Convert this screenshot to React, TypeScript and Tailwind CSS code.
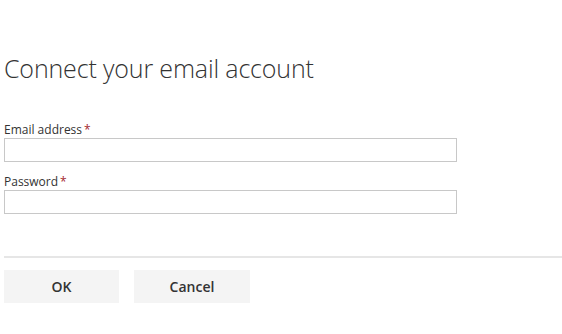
export default function App() {
  return (
    <div
      className="w-[562px] h-[334px] bg-white text-[#333] pl-[4px]"
      style={{ fontFamily: '"Open Sans", "Noto Sans", sans-serif' }}
    >
      <h1 className="pt-[51px] text-[25px] font-light leading-[34px] text-[#333] tracking-[-0.15px]">
        Connect your email account
      </h1>
      <form className="mt-[37px] w-[453px] flex flex-col">
        <label className="text-[12px] leading-[16px] text-[#333]">
          Email address<span className="text-[#a4262c] ml-[2px]">*</span>
        </label>
        <input className="h-[24px] border border-[#c8c8c8] outline-none" />
        <label className="mt-[12px] text-[12px] leading-[16px] text-[#333]">
          Password<span className="text-[#a4262c] ml-[2px]">*</span>
        </label>
        <input type="password" className="h-[24px] border border-[#c8c8c8] outline-none" />
      </form>
      <div className="mt-[42px] h-[2px] bg-[#e6e6e6]" />
      <div className="mt-[12px] flex gap-[15px]">
        <button className="w-[115px] h-[33px] bg-[#f4f4f4] text-[14px] font-semibold text-[#333]">OK</button>
        <button className="w-[116px] h-[33px] bg-[#f4f4f4] text-[14px] font-semibold text-[#333]">Cancel</button>
      </div>
    </div>
  );
}
